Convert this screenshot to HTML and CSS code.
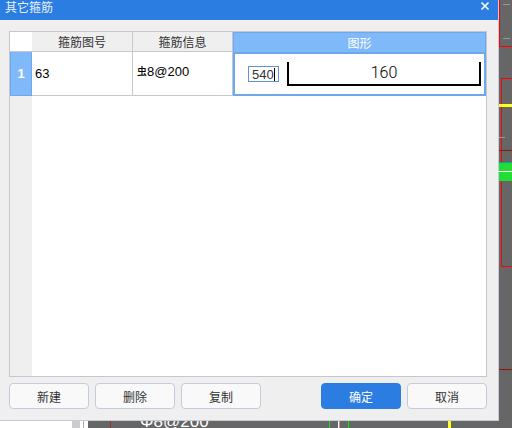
FILE: index.html
```html
<!DOCTYPE html>
<html lang="zh">
<head>
<meta charset="utf-8">
<title>其它箍筋</title>
<link rel="stylesheet" href="styles.css">
</head>
<body>
<div class="desktop">
  <svg class="cad" width="512" height="428" viewBox="0 0 512 428" aria-hidden="true">
    <rect x="0" y="420" width="72" height="8" fill="#fff"/>
    <rect x="72" y="420" width="8" height="8" fill="#ccc"/>
    <rect x="80" y="420" width="8" height="8" fill="#fff"/>
    <rect x="83" y="420" width="1" height="8" fill="#aaa"/>
    <rect x="110" y="420" width="1" height="8" fill="#a03020"/>
    <rect x="329" y="420" width="1" height="8" fill="#22dd22"/>
    <rect x="338" y="420" width="1" height="8" fill="#fff"/>
    <rect x="339" y="420" width="1" height="8" fill="#d88"/>
    <rect x="348" y="420" width="1" height="8" fill="#00ee00"/>
    <rect x="448" y="420" width="3" height="8" fill="#ffff22"/>
    <rect x="499" y="0" width="1" height="46" fill="#ff0000"/>
    <rect x="499" y="46" width="13" height="1" fill="#ff0000"/>
    <rect x="501" y="78" width="1" height="189" fill="#ff0000"/>
    <rect x="501" y="78" width="11" height="1" fill="#ff0000"/>
    <rect x="501" y="266" width="11" height="1" fill="#ff0000"/>
    <rect x="503" y="4" width="7" height="1" fill="#999"/>
    <rect x="503" y="38" width="7" height="1" fill="#999"/>
    <rect x="499" y="104" width="13" height="3" fill="#ffff22"/>
    <rect x="499" y="137" width="6" height="1" fill="#999"/>
    <rect x="499" y="150" width="13" height="1" fill="#8b1a00"/>
    <rect x="499" y="162" width="13" height="1" fill="#1a9a9a"/>
    <rect x="499" y="163" width="13" height="8" fill="#22dd33"/>
    <rect x="499" y="171" width="13" height="1" fill="#fff"/>
    <rect x="499" y="172" width="13" height="9" fill="#22dd33"/>
    <rect x="499" y="369" width="13" height="1" fill="#8b1a00"/>
  </svg>
  <span class="cad-text">Φ8@200</span>
  <section class="dialog">
    <header class="titlebar">
      <span class="title">其它箍筋</span>
      <svg class="close" width="10" height="10" viewBox="0 0 10 10" aria-hidden="true"><path d="M1.5 1.5 8.5 8.5M8.5 1.5 1.5 8.5" stroke="#fff" stroke-width="1.6" fill="none"/></svg>
    </header>
    <div class="content">
      <div class="table">
        <div class="corner"></div>
        <div class="head">箍筋图号</div>
        <div class="head">箍筋信息</div>
        <div class="head head-active">图形</div>
        <div class="rowhead">1</div>
        <div class="cell">63</div>
        <div class="cell cell-info"><span class="grade">虫</span><span>8@200</span></div>
        <div class="cell-shape">
          <div class="edit"><span>540</span><i class="caret"></i></div>
          <div class="hook">160</div>
        </div>
        <div class="gutter"></div>
        <div class="blank"></div>
      </div>
      <div class="actions">
        <button class="btn">新建</button>
        <button class="btn">删除</button>
        <button class="btn">复制</button>
        <span class="spacer"></span>
        <button class="btn btn-primary">确定</button>
        <button class="btn">取消</button>
      </div>
    </div>
  </section>
</div>
</body>
</html>
```
FILE: styles.css
```css
* { box-sizing: border-box; }
html, body { margin: 0; padding: 0; }
body { font-family: "Liberation Sans", "Noto Sans CJK SC", sans-serif; font-size: 12px; color: #111; }
.desktop { position: relative; width: 512px; height: 428px; background: #666; overflow: hidden; }
.cad { position: absolute; left: 0; top: 0; }
.cad-text { position: absolute; left: 140px; top: 412px; font-size: 17px; line-height: 20px; color: #fff; }
.dialog { position: absolute; left: 0; top: 0; width: 499px; height: 421px; display: flex; flex-direction: column; background: #efefef; border-right: 1px solid #c4cbdc; border-bottom: 1px solid #c4cbdc; }
.titlebar { height: 20px; flex: none; background: #2b7de1; color: #fff; display: flex; align-items: flex-start; justify-content: space-between; padding: 0 8px 0 5px; }
.title { font-family: "Noto Sans CJK SC", sans-serif; font-size: 12px; line-height: 14px; color: #e8f1ff; }
.close { margin-top: 1px; }
.content { flex: 1; display: flex; flex-direction: column; padding: 11px 11px 12px 9px; min-height: 0; }
.table { height: 346px; flex: none; display: grid; grid-template-columns: 22px 101px 100px 1fr; grid-template-rows: 20px 44px 1fr; border: 1px solid #c4c7cc; background: #fff; }
.corner { background: #fff; border-bottom: 1px solid #c4c7cc; }
.head { font-family: "Noto Sans CJK SC", sans-serif; background: #efefef; color: #333; font-size: 12px; display: flex; align-items: center; justify-content: center; border-right: 1px solid #c4c7cc; border-bottom: 1px solid #c4c7cc; }
.head-active { background: #7fb9fa; color: #fff; border: 1px solid #6ea8ec; border-bottom: 0; }
.rowhead { background: #7fb9fa; color: #fff; font-weight: bold; font-size: 13px; display: flex; align-items: center; justify-content: center; border: 1px solid #6ea8ec; border-top: 0; border-bottom: 1px solid #6ea8ec; }
.cell { display: flex; align-items: center; padding-left: 3px; border-right: 1px solid #c4c7cc; border-bottom: 1px solid #c4c7cc; background: #fff; color: #000; font-size: 13px; }
.cell-info { padding-left: 4px; padding-bottom: 4px; }
.grade { font-family: "Noto Sans CJK SC", sans-serif; font-size: 10px; line-height: 10px; margin-top: -2px; font-weight: 500; }
.cell-shape { display: flex; align-items: center; border: 2px solid #6ea8ec; background: #fff; padding: 0 3px 0 13px; gap: 8px; }
.edit { width: 31px; height: 16px; flex: none; border: 1px solid #5f8fe0; background: #fff; display: flex; align-items: center; padding-left: 3px; font-size: 13px; color: #333; }
.caret { width: 1px; height: 13px; background: #000; }
.hook { flex: 1; height: 24px; border: 2px solid #000; border-top: 0; font-family: Roboto, sans-serif; font-weight: 300; font-size: 16px; line-height: 22px; text-align: center; color: #000; }
.gutter { background: #efefef; }
.blank { grid-column: 2 / 5; background: #fff; }
.actions { display: flex; gap: 6px; margin-top: 6px; }
.spacer { flex: 1; margin-left: -6px; margin-right: -6px; }
.btn { width: 80px; height: 26px; flex: none; padding: 0; border: 1px solid #c4cbdc; border-radius: 4px; background: #f9f9f9; color: #333; font-family: "Noto Sans CJK SC", sans-serif; font-size: 12px; }
.btn-primary { background: #2b7de1; border-color: #2b7de1; color: #fff; }
```
